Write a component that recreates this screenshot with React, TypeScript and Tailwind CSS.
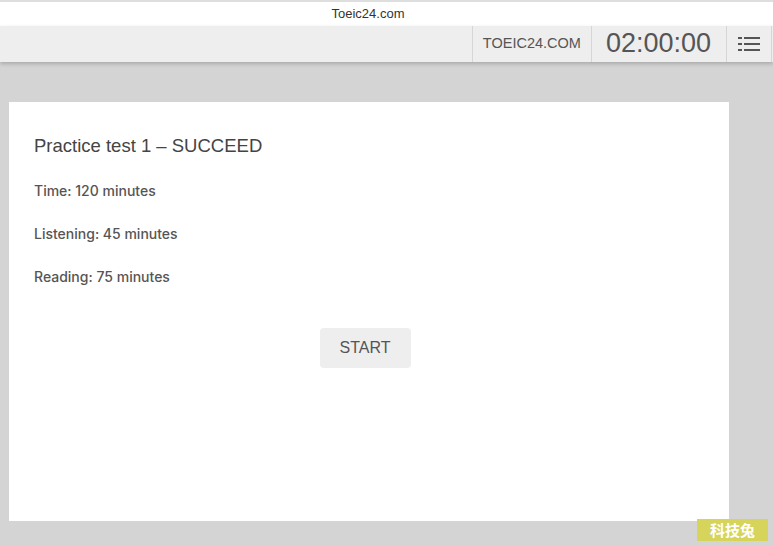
import React from 'react';

const font = { fontFamily: '"Liberation Sans", Arial, sans-serif' };
const bodyFont = { fontFamily: 'Inter, "Liberation Sans", Arial, sans-serif' };

function MenuIcon() {
  return (
    <svg width="22" height="16" viewBox="0 0 22 16" fill="none">
      <rect x="0" y="1" width="4" height="2" fill="#555" />
      <rect x="6" y="1" width="16" height="2" fill="#555" />
      <rect x="0" y="7" width="4" height="2" fill="#555" />
      <rect x="6" y="7" width="16" height="2" fill="#555" />
      <rect x="0" y="13" width="4" height="2" fill="#555" />
      <rect x="6" y="13" width="16" height="2" fill="#555" />
    </svg>
  );
}

export default function App() {
  return (
    <div className="w-[773px] h-[546px] overflow-hidden bg-[#d4d4d4] flex flex-col relative" style={font}>
      {/* Window title */}
      <div className="h-[26px] bg-white border-t-2 border-[#dedede] flex items-center justify-center pr-[37px] shrink-0">
        <span className="text-[13px] text-[#333]">Toeic24.com</span>
      </div>

      {/* Toolbar */}
      <div className="h-[36px] bg-[#eeeeee] flex justify-end shrink-0 shadow-[0_2px_4px_rgba(0,0,0,0.2)] relative z-10">
        <div className="border-l border-[#d6d6d6] flex items-center px-[10px] text-[14.5px] text-[#555]">
          TOEIC24.COM
        </div>
        <div className="border-l border-[#d6d6d6] flex items-center pl-[14px] pr-[15px] pb-[1px] text-[27px] text-[#555]">
          02:00:00
        </div>
        <div className="border-l border-r border-[#d6d6d6] w-[46px] flex items-center justify-center">
          <MenuIcon />
        </div>
        <div className="w-[1px]" />
      </div>

      {/* Content */}
      <div className="pt-[40px] pl-[9px]">
        <div className="w-[720px] h-[419px] bg-white px-[25px] pt-[33px]">
          <h1 className="text-[18.5px] text-[#444] leading-[22px]">Practice test 1 – SUCCEED</h1>
          <div style={bodyFont}>
            <p className="text-[14px] font-medium text-[#555] mt-[26px] leading-[16px]">Time: 120 minutes</p>
            <p className="text-[14px] font-medium text-[#555] mt-[27px] leading-[16px]">Listening: 45 minutes</p>
            <p className="text-[14px] font-medium text-[#555] mt-[27px] leading-[16px]">Reading: 75 minutes</p>
          </div>
          <div className="flex justify-center mt-[43px] pr-[8px]">
            <button className="w-[91px] h-[40px] rounded-[4px] bg-[#eeeeee] text-[16px] text-[#555]">START</button>
          </div>
        </div>
      </div>

      {/* Watermark */}
      <div className="absolute left-[697px] top-[519px] w-[71px] h-[22px] bg-[#d6d45a] flex items-center justify-center">
        <span className="text-[15px] font-bold text-white" style={{ fontFamily: '"Noto Sans CJK SC", sans-serif' }}>科技兔</span>
      </div>
    </div>
  );
}
